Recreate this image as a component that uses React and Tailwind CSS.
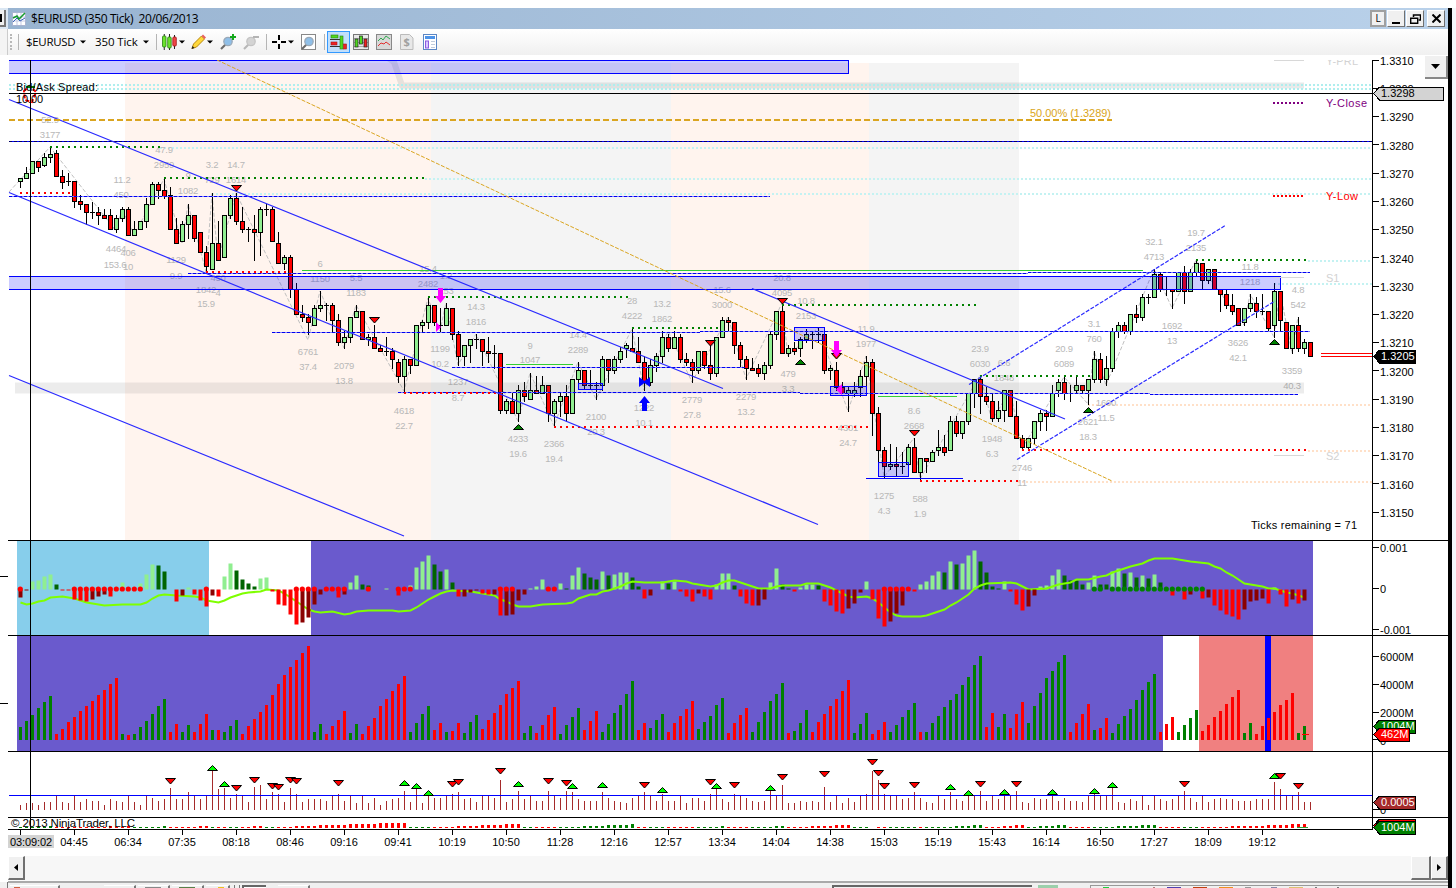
import { useMemo } from 'react';
import clsx from 'clsx';

const STEP = 6;
const X0 = 20;
const px = (i) => X0 + STEP * i;

// wick top, body top, body bottom, wick bottom
const CANDLES = `g178 178 181 187,g167 173 178 178,g161 161 173 173,r161 161 167 171,g153 157 165 166,g147 154 157 162,r150 153 176 176,r170 176 182 188,d173 181 181 185,r181 181 201 207,r195 201 204 209,r204 204 212 224,d202 212 212 218,r207 212 215 224,r209 215 218 218,r209 215 229 229,g215 218 229 232,g207 209 218 221,r207 209 235 235,g221 229 235 235,g221 221 229 229,g198 204 221 227,g182 184 204 204,r182 184 190 198,r179 190 196 198,r187 195 229 229,r218 229 243 243,g221 224 241 241,g204 215 224 238,r215 215 238 241,r232 232 252 252,r246 252 266 272,g193 243 269 269,r221 243 260 260,g215 215 257 257,g195 198 215 218,r193 198 221 224,r207 221 229 232,d227 229 229 241,r215 229 232 260,g207 209 232 255,d204 209 209 215,r207 209 241 241,r232 243 263 263,g255 257 263 269,r255 257 289 297,r283 289 314 314,r305 314 317 321,r314 317 322 334,g305 308 325 325,g291 305 308 311,d303 305 305 320,r303 305 320 331,r314 320 342 345,g331 337 342 348,g317 317 337 342,g305 311 317 317,r311 311 339 339,g334 337 339 345,r325 337 348 348,r345 348 351 351,d337 351 351 355,r348 351 359 368,r359 362 376 382,g356 359 376 391,r359 359 365 373,g325 325 365 365,g320 322 325 331,g298 305 322 328,r305 305 322 325,d308 325 325 331,g303 308 325 325,r308 308 334 339,r331 334 356 365,g345 345 356 365,g339 339 345 362,d334 339 339 348,r339 339 351 365,r337 351 353 362,d345 353 353 368,r353 353 410 413,g399 401 410 413,r393 401 413 413,g385 390 413 421,r382 390 396 401,g373 390 399 399,r376 390 393 393,g376 385 393 393,r385 385 413 421,g399 401 413 426,g393 396 401 416,r385 396 413 421,g379 379 413 413,g362 370 379 385,r370 370 385 388,d370 385 385 388,d382 385 385 399,g356 359 385 390,r359 359 370 382,g356 359 370 373,g347 351 359 362,g343 345 348 357,r329 348 351 351,r337 351 362 362,r356 362 382 390,g359 365 382 385,g353 356 365 371,g331 337 356 362,r334 337 348 351,g331 337 348 348,r334 337 359 362,r353 359 362 365,r359 362 370 382,g351 351 370 373,r351 351 365 368,r345 365 373 379,g337 337 373 376,g317 320 337 337,r317 320 322 331,r322 322 345 353,r342 345 359 367,r356 359 368 379,r358 368 370 370,r364 368 373 376,g362 365 373 379,g331 334 365 368,g311 311 334 339,r303 311 353 353,g345 348 353 356,r342 348 351 354,g337 339 348 356,g329 334 339 342,d331 334 334 348,d328 334 334 342,r333 334 370 373,g365 368 370 379,r362 370 387 390,r382 387 393 393,g387 390 393 411,g382 390 393 396,g370 376 387 396,g356 362 376 387,r359 362 413 435,r407 413 450 462,r447 450 466 477,g444 464 466 469,r447 464 466 476,d452 466 466 473,g444 447 464 466,r438 447 472 472,g458 458 472 479,r458 458 461 472,g450 452 461 461,g430 447 450 455,r435 447 452 455,g416 421 450 450,r416 421 433 436,g421 421 433 438,g393 393 421 424,g379 379 393 407,r375 379 396 413,r387 396 401 404,r393 401 418 421,g401 410 418 421,g390 390 410 421,r390 390 416 416,r401 416 438 438,r435 438 447 449,g438 438 447 450,g421 421 438 443,g410 413 421 430,r410 413 416 430,g385 393 416 416,g379 382 390 396,r377 382 393 399,d385 393 393 401,g377 385 390 393,r385 385 390 393,g379 379 390 404,g351 359 379 382,r353 359 379 382,g356 368 379 385,g328 331 368 371,g322 325 331 337,r322 325 331 333,g314 314 331 334,r305 314 317 322,g294 297 317 320,d294 297 297 303,g269 274 297 297,r272 274 289 291,d277 289 289 295,r289 289 291 308,g272 272 291 291,r266 272 291 303,g269 272 291 291,g260 263 272 275,r263 263 280 289,g269 269 280 283,r269 269 289 289,r289 289 294 311,r289 294 305 308,r294 305 311 314,r308 308 325 325,g308 308 322 325,g294 303 308 311,r297 303 311 317,d294 311 311 314,r311 311 328 331,g283 291 325 337,r291 291 320 331,r322 322 348 348,g325 325 348 353,r317 325 348 351,g339 342 348 353,r342 342 356 356`;

const MACD = 'm-8 m-1 l8 l9 l13 l15 g5 r-1 r-1 r-10 r-11 r-12 m-10 m-7 m-5 r-7 l0 l7 l0 l0 l6 l15 l25 g24 g18 l0 r-12 m-6 l2 r-5 r-11 r-17 m-6 r-7 l13 l26 g19 g10 g6 g3 l11 l12 r-2 r-15 r-16 r-25 r-35 m-33 m-28 m-15 m-5 l0 l0 r-8 m-5 l7 l14 g5 g4 l0 l0 l1 l0 r-6 l0 l4 l22 l28 l34 g25 g18 l20 g7 r-7 m-7 m-3 m-1 r-4 r-5 m-5 r-26 m-26 m-25 m-11 m-5 l1 l3 l10 l0 l0 l6 g1 l14 l22 g16 g12 g10 l18 g14 l15 l17 l17 g12 g3 r-9 m-6 l0 l8 g6 l8 r-2 r-7 r-12 m-4 r-7 r-10 l5 l16 l16 g4 r-7 r-14 r-16 m-16 m-10 l7 l21 g5 g1 r-2 l2 l5 l5 g4 r-12 r-16 r-22 r-24 m-19 m-14 m-3 l8 r-10 r-29 r-37 m-32 m-24 m-16 l0 r-2 l5 l8 l14 l18 g17 l28 g25 l26 l34 l39 g28 g17 g3 g1 l8 r-2 r-15 r-21 m-17 m-6 l3 l4 l14 l20 g14 g9 g9 g5 l7 l14 g5 g5 l18 l21 g16 l17 g12 l14 g11 l15 g7 l0 r-6 l0 r-10 m-5 l0 r-9 m-8 r-16 r-21 r-25 r-27 r-30 m-20 m-12 m-11 m-9 r-14 l2 r-5 r-17 m-10 r-14 m-11';

const VOLUME = 'g13 g19 g25 g32 g38 g44 r6 r11 r18 r23 r29 r34 r39 r45 r50 r56 r62 g6 r5 g6 g13 g19 g26 g34 g41 r8 r16 g8 g15 r8 r16 r26 g10 r10 g8 g14 g20 r6 r14 r21 r28 r35 r45 r56 r65 r73 r80 r87 r94 g8 g16 r6 r14 r20 r29 g7 g16 r6 r14 r22 r34 r41 r49 r56 r64 g8 g17 g26 g34 r10 r17 g8 r9 r17 g7 g18 g25 r11 r20 r27 r35 r46 r52 r59 g7 g14 r7 r15 r25 r33 g6 g15 g23 g32 r10 r19 r29 g8 g16 g27 g35 g46 g59 r10 r17 g12 g20 g26 r8 r17 r24 r31 r39 g11 g18 g24 g35 g42 r7 r17 r25 r32 g8 g18 g28 g39 g46 g57 r7 g9 g17 g30 r8 r18 r26 r34 r41 r49 r60 g7 g16 g27 r6 r10 r18 g8 g15 g23 g30 g37 r8 g8 g17 g24 g33 g40 g46 g55 g63 g75 g84 r13 r27 g13 g26 r12 r26 r38 g17 g34 g47 g62 g69 g78 g85 r8 r17 r26 r36 g10 r12 r22 g7 g16 g24 g31 g40 g50 g58 g66 r8 r16 r23 g8 g15 g22 g30 r9 r15 r23 r29 r36 r43 r50 g7 g17 r6 r14 r22 r28 r35 r40 r47 g7 g14';

const RANGE = '5 7 7 5 8 8 14 8 7 14 8 11 9 9 5 11 9 8 14 8 5 14 12 9 11 22 11 11 18 14 11 14 40 21 22 12 16 14 8 23 25 11 18 16 8 22 16 8 11 11 11 9 14 16 9 14 7 14 7 12 5 9 11 12 19 8 21 7 15 12 12 14 16 18 11 12 8 14 14 12 30 8 11 19 11 14 9 9 19 14 12 19 18 11 9 9 9 18 12 9 8 7 12 14 18 14 9 16 9 9 14 7 12 12 9 16 23 11 8 16 14 12 9 8 9 19 14 25 7 7 9 8 9 8 23 8 14 7 12 8 14 16 39 30 16 14 14 11 12 18 12 8 7 14 11 18 11 9 14 14 19 9 14 11 14 14 19 8 7 12 11 11 14 9 12 9 9 8 14 16 14 14 22 8 7 11 9 14 5 14 11 9 11 14 19 12 8 14 8 11 12 11 11 9 9 9 11 11 11 28 21 14 14 18 8 8';

// first bar, last bar, colour, height
const STRIP = [
  [0, 4, 'g', 1], [5, 5, 'g', 2], [6, 14, 'r', 1], [15, 15, 'r', 2], [16, 17, 'r', 1], [18, 18, 'r', 2],
  [19, 23, 'g', 1], [24, 24, 'g', 2], [25, 29, 'r', 1], [30, 31, 'r', 2], [32, 32, 'g', 1], [33, 34, 'r', 1],
  [35, 36, 'g', 1], [37, 38, 'r', 1], [39, 40, 'r', 2], [41, 42, 'g', 1], [43, 45, 'r', 1], [46, 49, 'r', 2],
  [50, 54, 'r', 3], [55, 59, 'r', 4], [60, 64, 'r', 5], [65, 68, 'g', 1], [69, 72, 'r', 1], [73, 76, 'r', 2],
  [77, 80, 'r', 3], [81, 83, 'r', 4], [84, 85, 'g', 1], [86, 89, 'r', 1], [90, 93, 'g', 1], [94, 97, 'g', 2],
  [98, 101, 'g', 3], [102, 102, 'g', 4], [103, 104, 'r', 1], [105, 107, 'g', 1], [108, 112, 'r', 1],
  [113, 116, 'g', 1], [117, 117, 'g', 2], [118, 121, 'r', 1], [122, 125, 'g', 1], [126, 127, 'g', 2],
  [128, 131, 'r', 1], [132, 135, 'r', 2], [136, 138, 'r', 3], [139, 141, 'g', 1], [143, 144, 'r', 1],
  [145, 149, 'g', 1], [150, 150, 'r', 1], [151, 155, 'g', 1], [156, 158, 'g', 2], [159, 160, 'g', 3],
  [161, 163, 'r', 1], [164, 165, 'r', 2], [166, 167, 'r', 3], [168, 169, 'g', 1], [170, 172, 'g', 2],
  [173, 174, 'g', 3], [175, 178, 'r', 1], [179, 182, 'g', 1], [183, 186, 'g', 2], [187, 189, 'g', 3],
  [190, 193, 'r', 1], [194, 196, 'g', 1], [197, 201, 'r', 1], [202, 207, 'r', 2], [208, 211, 'r', 3],
  [212, 214, 'r', 4],
];

const SIGNAL = '0,603 1,605 2,604 3,602 4,601 5,598 7,597 9,599 10,601 11,603 12,604 14,606 17,605 20,605 21,603 22,599 23,596 24,595 26,596 29,597 30,598 31,601 33,603 34,601 35,598 36,596 37,594 38,593 40,592 41,590 43,591 44,594 45,598 46,602 47,606 48,610 49,612 50,613 52,612 54,615 55,614 56,612 58,611 62,611 63,612 65,611 66,608 67,604 68,600 69,597 70,594 71,592 72,591 75,592 76,593 77,594 79,596 80,600 81,602 82,605 83,607 85,607 87,605 91,604 92,603 93,599 94,597 95,595 96,595 97,592 98,591 99,589 100,587 101,584 102,582 104,583 107,583 109,581 111,582 112,584 114,586 115,587 116,586 117,583 118,581 119,581 120,583 121,585 122,587 123,589 124,589 125,589 126,587 127,586 130,586 131,584 133,584 134,586 135,588 136,591 137,594 138,597 139,598 141,597 142,599 143,603 144,608 145,613 146,616 147,617 150,617 151,616 152,614 153,612 154,610 155,606 156,603 157,599 158,595 159,589 160,586 161,584 165,583 166,584 167,587 168,590 171,589 172,587 173,585 175,583 176,580 178,580 180,577 181,576 182,573 183,571 184,569 185,567 187,564 188,561 189,559 192,559 193,560 195,562 198,564 199,567 200,569 201,573 202,576 203,580 204,584 205,585 207,587 208,589 209,589 210,591 211,593 212,594 213,596 214,598';

const ZIGZAG = '9,192 50,147 116,231 122,209 134,235 164,179 182,243 188,204 206,272 212,193 218,260 236,193 308,340 320,291 344,348 356,305 404,391 428,298 440,331 446,303 458,365 476,334 518,421 530,373 554,426 578,362 596,399 632,329 644,390 668,331 692,382 728,317 746,379 782,303 788,356 818,328 848,411 866,356 884,477 914,438 920,479 980,375 992,421 1010,390 1022,449 1064,377 1088,404 1094,351 1106,385 1154,269 1172,308 1196,260 1244,325 1250,294 1274,337 1280,291 1292,353 1298,317';

const SWING_LABELS = [
  [50, 119, '52.9'], [50, 134, '3177'], [164, 149, '47.9'], [164, 164, '2959'], [122, 179, '11.2'], [121, 194, '450'],
  [212, 164, '3.2'], [212, 179, '729'], [236, 164, '14.7'], [236, 179, '1614'], [188, 175, '9'], [188, 190, '1082'],
  [116, 248, '4464'], [128, 252, '406'], [115, 264, '153.6'], [128, 266, '10'], [176, 259, '1129'], [176, 275, '9.9'],
  [218, 277, '450'], [218, 292, '4'], [206, 289, '1842'], [206, 303, '15.9'], [320, 263, '6'], [320, 278, '1150'],
  [356, 277, '5.5'], [356, 292, '1183'], [308, 351, '6761'], [308, 366, '37.4'], [344, 365, '2079'], [344, 380, '13.8'],
  [428, 268, '15.4'], [428, 283, '2482'], [446, 275, '1.2'], [446, 290, '153'], [476, 306, '14.3'], [476, 321, '1816'],
  [440, 348, '1199'], [440, 363, '10.2'], [458, 381, '1237'], [458, 397, '8.7'], [404, 410, '4618'], [404, 425, '22.7'],
  [530, 345, '9'], [530, 359, '1047'], [518, 438, '4233'], [518, 453, '19.6'], [554, 443, '2366'], [554, 458, '19.4'],
  [578, 334, '14.4'], [578, 349, '2289'], [596, 416, '2100'], [596, 431, '20.3'], [632, 300, '28'], [632, 315, '4222'],
  [662, 303, '13.2'], [662, 318, '1862'], [644, 407, '1222'], [644, 422, '10.1'], [692, 399, '2779'], [692, 414, '27.8'],
  [746, 396, '2279'], [746, 411, '13.2'], [722, 289, '15.6'], [722, 304, '3000'], [782, 277, '20.8'], [782, 292, '4095'],
  [806, 300, '10.8'], [806, 315, '2153'], [788, 373, '479'], [788, 388, '3.3'], [866, 328, '11.9'], [866, 343, '1977'],
  [848, 427, '4301'], [848, 442, '24.7'], [914, 410, '8.6'], [914, 425, '2668'], [884, 495, '1275'], [884, 510, '4.3'],
  [920, 498, '588'], [920, 513, '1.9'], [980, 348, '23.9'], [980, 363, '6030'], [1004, 362, '6.6'], [1004, 377, '1848'],
  [992, 438, '1948'], [992, 453, '6.3'], [1022, 467, '2746'], [1022, 482, '11'], [1064, 348, '20.9'], [1064, 363, '6089'],
  [1094, 323, '3.1'], [1094, 338, '760'], [1106, 402, '1600'], [1106, 417, '11.5'], [1088, 421, '2621'], [1088, 436, '18.3'],
  [1154, 241, '32.1'], [1154, 256, '4713'], [1196, 232, '19.7'], [1196, 247, '2135'], [1172, 325, '1692'], [1172, 340, '13'],
  [1238, 342, '3626'], [1238, 357, '42.1'], [1250, 266, '11.8'], [1250, 281, '1218'], [1298, 289, '4.8'], [1298, 304, '542'],
  [1292, 370, '3359'], [1292, 385, '40.3'],
];

const TIMES = ['04:45', '06:34', '07:35', '08:18', '08:46', '09:16', '09:41', '10:19', '10:50', '11:28', '12:16', '12:57', '13:34', '14:04', '14:38', '15:03', '15:19', '15:43', '16:14', '16:50', '17:27', '18:09', '19:12'];

const RED_DOTS = [[0, 0], [9, 20], [31, 31], [46, 49], [51, 54], [58, 58], [63, 65], [80, 82], [88, 89], [144, 148]];
const GREEN_DOTS = [[179, 180], [182, 197]];

const RANGE_DOWN = [[25, 781], [36, 788], [39, 780], [42, 786], [43, 787], [45, 780], [46, 781], [53, 783], [72, 784], [73, 782], [80, 771], [88, 781], [91, 783], [104, 785], [115, 782], [119, 785], [127, 777], [134, 774], [142, 762], [143, 773], [144, 786], [149, 785], [160, 784], [166, 784], [194, 784], [213, 786]];
const RANGE_UP = [[32, 768], [34, 784], [64, 783], [66, 786], [68, 793], [83, 784], [92, 786], [97, 785], [107, 790], [116, 786], [125, 788], [155, 787], [158, 793], [164, 792], [172, 792], [179, 791], [182, 785], [209, 776]];

const COLORS = { l: '#90ee90', g: '#006400', r: '#ff0000', m: '#8b0000' };

const parse = (str) => str.split(' ').map((s) => ({ c: s[0], v: Number(s.slice(1)) }));
const expand = (ranges) => ranges.flatMap(([a, b]) => Array.from({ length: b - a + 1 }, (_, k) => a + k));

const Line = ({ x1, x2, y, y2 = y, color, w = 1, dash }) => (
  <line x1={x1} x2={x2} y1={y} y2={y2} stroke={color} strokeWidth={w} strokeDasharray={dash} />
);

// blue line with a stronger dash on top
const Level = ({ x1, x2, y }) => (
  <>
    <Line x1={x1} x2={x2} y={y} color="#7c7cff" />
    <Line x1={x1} x2={x2} y={y} color="#0000f0" dash="3 2" />
  </>
);

const Down = ({ x, y, fill = '#ff0000' }) => (
  <path d={`M${x - 4.5} ${y - 2.5}h10l-5 5.5z`} fill={fill} stroke="#000" strokeWidth="1" />
);

const Up = ({ x, y, fill = '#008000' }) => (
  <path d={`M${x - 4.5} ${y + 2.5}h10l-5 -5z`} fill={fill} stroke="#000" strokeWidth="1" />
);

const Tag = ({ y, w, fill, text, color = '#fff', h = 13 }) => (
  <g>
    <path
      d={`M1373.5 ${y + 0.5}l6 -${h / 2}h${w}v${h}h-${w}z`}
      fill={fill}
      stroke="#000"
      shapeRendering="crispEdges"
    />
    <text x="1381" y={y + 4} fill={color}>{text}</text>
  </g>
);

function PricePane() {
  const candles = useMemo(
    () => CANDLES.split(',').map((row) => [row[0], ...row.slice(1).split(' ').map(Number)]),
    []
  );

  return (
    <g clipPath="url(#price-clip)">
      <clipPath id="price-clip">
        <rect x="8" y="60" width="1365" height="480" />
      </clipPath>

      {/* Sessions */}
      <g shapeRendering="crispEdges">
        <rect x="125" y="63" width="306" height="477" fill="#fff4ee" />
        <rect x="431" y="63" width="240" height="477" fill="#f4f4f4" />
        <rect x="671" y="63" width="198" height="477" fill="#fff4ee" />
        <rect x="869" y="63" width="150" height="477" fill="#f4f4f4" />
      </g>
      <path d="M388 58L394 62L402 85.5H1304" fill="none" stroke="#708080" strokeOpacity="0.17" strokeWidth="6" />

      <g shapeRendering="crispEdges">
        <Line x1={9} x2={1372} y={85} w={2} color="#afeeee" dash="2 2" />
        <Line x1={9} x2={1372} y={89} w={2} color="#afeeee" dash="2 2" />
        <Line x1={160} x2={1372} y={148} w={2} color="#c4f2f2" dash="2 2" />
        <Line x1={425} x2={1372} y={179} w={2} color="#c4f2f2" dash="2 2" />
        <Line x1={212} x2={1372} y={194} w={2} color="#c4f2f2" dash="2 2" />
        <Line x1={1308} x2={1372} y={261} w={2} color="#c4f2f2" dash="2 2" />
        <Line x1={1274} x2={1372} y={284} w={2} color="#c4f2f2" dash="2 2" />
        <Line x1={1088} x2={1372} y={405} w={2} color="#ffe0c8" dash="2 2" />
        <Line x1={1308} x2={1372} y={451} w={2} color="#ffe0c8" dash="2 2" />
        <Line x1={1018} x2={1372} y={482} w={2} color="#ffe0c8" dash="2 2" />
      </g>

      <polyline points={ZIGZAG} fill="none" stroke="#c0c0c0" strokeDasharray="4 2" />
      <g fill="#b8b8b8" fontSize="9.500" letterSpacing="-0.220" textAnchor="middle">
        {SWING_LABELS.map(([x, y, t]) => (
          <text key={`${x}-${y}`} x={x} y={y + 3.5}>{t}</text>
        ))}
      </g>

      {/* Candles */}
      <g shapeRendering="crispEdges" stroke="#000">
        {candles.map(([c, h, t, b, l], i) => (
          <g key={i}>
            <line x1={px(i) + 0.5} x2={px(i) + 0.5} y1={h} y2={l + 1} />
            {c === 'd' ? (
              <line x1={px(i) - 2} x2={px(i) + 3} y1={t + 0.5} y2={t + 0.5} />
            ) : (
              <rect
                x={px(i) - 1.5}
                y={t + 0.5}
                width="4"
                height={Math.max(b - t, 2)}
                fill={c === 'g' ? '#90ee90' : '#ff0000'}
              />
            )}
          </g>
        ))}
      </g>

      <rect x="15" y="382.500" width="1289" height="11" fill="#606060" fillOpacity="0.12" />

      {/* Swing levels */}
      <g shapeRendering="crispEdges">
        <Line x1={302} x2={1143} y={270.5} color="#32cd32" />
        <Line x1={506} x2={573} y={364.5} color="#32cd32" />
        <Line x1={878} x2={957} y={396.5} color="#32cd32" />
        <Line x1={866} x2={963} y={478.5} color="#0000ff" />
        <Line x1={9} x2={1372} y={141.5} color="#0000ff" />
        <Line x1={9} x2={1372} y={141.5} color="#000060" dash="3 2" />
        <Level x1={9} x2={770} y={196.5} />
        <Level x1={188} x2={1028} y={273.5} />
        <Level x1={1028} x2={1310} y={272.5} />
        <Level x1={272} x2={700} y={332.5} />
        <Level x1={700} x2={1310} y={331.5} />
        <Level x1={452} x2={745} y={367.5} />
        <Level x1={398} x2={800} y={392.5} />
        <Level x1={800} x2={1150} y={393.5} />
        <Level x1={1150} x2={1298} y={394.5} />
        {[[50, 160, 147], [164, 425, 178], [428, 628, 297], [632, 718, 328], [782, 977, 305], [980, 1092, 376], [1196, 1308, 260]].map(([a, b, y]) => (
          <Line key={y} x1={a} x2={b} y={y} w={2} color="#008000" dash="2 4" />
        ))}
        {[[20, 72, 193], [206, 290, 272], [404, 500, 393], [554, 868, 427], [920, 1018, 481], [1022, 1308, 450]].map(([a, b, y]) => (
          <Line key={y} x1={a} x2={b} y={y} w={2} color="#ff0000" dash="2 4" />
        ))}
      </g>

      {/* Zones */}
      <g fill="#0000ff" fillOpacity="0.2" stroke="#0000ff" shapeRendering="crispEdges">
        <path d="M9 60H848.5V73.5H9" />
        <path d="M9 276.5H1280.5V289.5H9" />
        <rect x="578.5" y="383.5" width="24" height="6" />
        <rect x="794.5" y="327.5" width="30" height="13" />
        <rect x="830.5" y="386.5" width="36" height="9" />
        <rect x="878.5" y="462.5" width="30" height="14" />
      </g>

      {/* Channels */}
      <g stroke="#2a2aff" strokeWidth="1.200">
        <path d="M9 99.500L723 388.500M9 192.500L818 524.500M9 375.500L404 536M752 288.500L1065 419" />
        <path d="M969 384.500L1226 225M1017 459.500L1275 301" strokeDasharray="4 1.500" />
      </g>
      <path d="M217 60L1112 481" stroke="#daa520" strokeDasharray="4 1.500" />
      <Line x1={9} x2={1112} y={120} w={2} color="#daa520" dash="6 3" />
      <text x="1030" y="117" fill="#daa520" textLength="81">50.00% (1.3289)</text>

      {/* Signals */}
      <Down x={236} y={188} />
      <Down x={374} y={320} />
      <Down x={710} y={343} />
      <Down x={782} y={301} />
      <Down x={836} y={356} />
      <Down x={914} y={433} />
      <Up x={518} y={427} />
      <Up x={800} y={362} />
      <Up x={1088} y={410} />
      <Up x={1274} y={342} />
      <path d="M438 288h5v8h3l-5.500 7l-5.500 -7h3zM834 341h5v9h3l-5.500 7l-5.500 -7h3zM436 322v10l5 -5zM842 384v11l-6 -5.500z" fill="#ff00ff" />
      <path d="M642 411h5v-8h3l-5.500 -7l-5.500 7h3zM639 377v10l5.500 -4l5.500 4v-10l-5.500 4z" fill="#0000ff" />

      {/* Prior day levels */}
      <g shapeRendering="crispEdges">
        <Line x1={1274} x2={1304} y={60.5} color="#d8d8d8" />
        <Line x1={1274} x2={1304} y={277.5} color="#d8d8d8" />
        <Line x1={1274} x2={1304} y={455.5} color="#d8d8d8" />
        <Line x1={1273} x2={1304} y={103} w={2} color="#800080" dash="2 2" />
        <Line x1={1273} x2={1304} y={196} w={2} color="#ff0000" dash="2 2" />
      </g>
      <text x="1326" y="65" fill="#d3d3d3" textLength="32">Y-PRL</text>
      <text x="1326" y="107" fill="#800080" textLength="41">Y-Close</text>
      <text x="1326" y="200" fill="#ff0000" textLength="32">Y-Low</text>
      <text x="1326" y="282" fill="#d3d3d3">S1</text>
      <text x="1326" y="460" fill="#d3d3d3">S2</text>
      <text x="1251" y="529" fill="#000" textLength="106">Ticks remaining = 71</text>

      <path d="M24 91l6 -5l6 6l-4 10l-7 -2z" fill="none" stroke="#ff0000" strokeWidth="2" strokeDasharray="4 2" />
      <path d="M26 87h9" stroke="#008000" strokeWidth="2" />
      <text x="16" y="91" fill="#000" textLength="82">Bid/Ask Spread:</text>
      <text x="16" y="103" fill="#000" textLength="27">10.00</text>
    </g>
  );
}

function MacdPane() {
  const bars = useMemo(() => parse(MACD), []);
  const signal = SIGNAL.split(' ').map((p) => {
    const [i, y] = p.split(',').map(Number);
    return `${px(i) + 0.5},${y - 0.5}`;
  }).join(' ');

  return (
    <g>
      <rect x="17" y="541" width="192" height="94" fill="#87ceeb" />
      <rect x="311" y="541" width="1002" height="94" fill="#6a5acd" />
      {bars.map(({ c, v }, i) => v > 0 && (
        <rect key={i} x={px(i) - 1.5} y={589.5 - v} width="4" height={v} fill={COLORS[c]} />
      ))}
      <polyline points={signal} fill="none" stroke="#7fff00" strokeWidth="2" />
      {bars.map(({ c, v }, i) => v < 0 && (
        <rect key={i} x={px(i) - 1.5} y="589.500" width="4" height={-v} fill={COLORS[c]} />
      ))}
      {expand(RED_DOTS).map((i) => <circle key={i} cx={px(i) + 0.3} cy="589" r="2.600" fill="#ff0000" />)}
      {expand(GREEN_DOTS).map((i) => <circle key={i} cx={px(i) + 0.3} cy="589" r="2.600" fill="#008000" />)}
    </g>
  );
}

function VolumePane() {
  const bars = useMemo(() => parse(VOLUME), []);
  return (
    <g shapeRendering="crispEdges">
      <rect x="17" y="636" width="1146" height="115" fill="#6a5acd" />
      <rect x="1199" y="636" width="114" height="115" fill="#f08080" />
      <rect x="1265" y="636" width="6" height="115" fill="#0000ff" />
      {bars.map(({ c, v }, i) => (
        <rect key={i} x={px(i) - 1} y={740 - v} width="3" height={v} fill={c === 'g' ? '#008000' : '#ff0000'} />
      ))}
      <rect x="1302" y="734" width="7" height="1" fill="#ff0000" />
    </g>
  );
}

function RangePane() {
  return (
    <g>
      <g shapeRendering="crispEdges">
        {RANGE.split(' ').map((v, i) => (
          <rect key={i} x={px(i)} y={810 - Number(v)} width="1" height={v} fill="#a52a2a" />
        ))}
        <Line x1={9} x2={1372} y={795.5} color="#0000ff" />
      </g>
      {RANGE_UP.map(([i, y]) => <Up key={i} x={px(i)} y={y} fill="#00ff00" />)}
      {RANGE_DOWN.map(([i, y]) => <Down key={i} x={px(i)} y={y} />)}
      <Down x={px(210)} y={776} />
    </g>
  );
}

function Axes() {
  return (
    <g>
      <g shapeRendering="crispEdges">
        {[540.5, 635.5, 751.5, 817.5].map((y) => <Line key={y} x1={8} x2={1448} y={y} color="#000" />)}
        <Line x1={8} x2={1373} y={829.5} color="#000" />
        <Line x1={1372.5} x2={1372.5} y={60} y2={829} color="#000" />
        <Line x1={9} x2={1373} y={93.5} color="#000" />
        <Line x1={30.5} x2={30.5} y={60} y2={829} color="#000" />
        {Array.from({ length: 24 }, (_, k) => (
          <Line key={k} x1={20.5 + 54 * k} x2={20.5 + 54 * k} y={829} y2={835} color="#000" />
        ))}
        <Line x1={1321} x2={1372} y={353.5} color="#ff0000" />
        <Line x1={1321} x2={1372} y={356.5} color="#ff0000" />
        {[548, 589, 630, 657, 685, 713, 740, 810].map((y) => (
          <Line key={y} x1={1373} x2={1379} y={y - 0.5} color="#000" />
        ))}
        {Array.from({ length: 17 }, (_, k) => (
          <Line key={k} x1={1373} x2={1379} y={Math.floor(60 + 28.25 * k) + 0.5} color="#000" />
        ))}
      </g>
      <g fill="#000">
        {Array.from({ length: 17 }, (_, k) => (
          <text key={k} x="1380" y={Math.round(64.8 + 28.25 * k)}>{(1.331 - 0.001 * k).toFixed(4)}</text>
        ))}
        <text x="1380" y="552">0.001</text>
        <text x="1380" y="593">0</text>
        <text x="1380" y="634">-0.001</text>
        <text x="1380" y="661">6000M</text>
        <text x="1380" y="689">4000M</text>
        <text x="1380" y="717">2000M</text>
        <text x="1380" y="745">0</text>
        <text x="1380" y="814">0</text>
      </g>
      <Tag y={93} w={64} fill="#d3d3d3" text="1.3298" color="#000" />
      <Tag y={356} w={36} fill="#000" text="1.3205" />
      <Tag y={726} w={36} fill="#008000" text="1004M" />
      <Tag y={734} w={30} fill="#ff0000" text="462M" />
      <Tag y={802} w={36} fill="#a52a2a" text="0.0005" />
      <Tag y={825} w={36} fill="#ff0000" text="" />
      <Tag y={827} w={36} fill="#008000" text="1004M" />

      <g shapeRendering="crispEdges">
        {STRIP.flatMap(([a, b, c, h]) => expand([[a, b]]).map((i) => (
          <rect key={i} x={px(i) - 1} y={828 - h} width="3" height={h} fill={c === 'g' ? '#008000' : '#ff0000'} />
        )))}
        <rect x="1297" y="827" width="11" height="1" fill="#32a032" />
      </g>
      <text x="11" y="827" fontSize="11.500" textLength="124">© 2013 NinjaTrader, LLC</text>

      <rect x="8" y="835" width="46" height="13" fill="#d3d3d3" />
      <text x="10" y="846" textLength="42">03:09:02</text>
      <g textAnchor="middle">
        {TIMES.map((t, k) => <text key={t} x={74 + 54 * k} y="846">{t}</text>)}
      </g>
    </g>
  );
}

const Arrow = ({ className }) => (
  <svg className={clsx('shrink-0', className)} width="6" height="4" viewBox="0 0 6 4">
    <path d="M0 .5h6L3 3.500z" fill="#000" />
  </svg>
);

const Sep = ({ className }) => <div className={clsx('h-4 w-px shrink-0 bg-[#b5b5b5]', className)} />;

const Lens = ({ gray }) => (
  <>
    <path d="M1 15l4.500 -4.500" stroke={gray ? '#b8b8b8' : '#6b6b6b'} strokeWidth="2.200" />
    <circle cx="8" cy="7.500" r="4.200" fill={gray ? '#d4d4d4' : '#8fbfe8'} stroke={gray ? '#c4c4c4' : '#9aa9b8'} strokeWidth="1.300" />
  </>
);

function Toolbar() {
  return (
    <div className="flex h-[26px] items-center bg-linear-to-b from-white to-[#f0f0f0] text-[12px] text-black">
      <div className="ml-0.5 h-4 w-1 border-l-2 border-dotted border-[#b8b8b8]" />
      <Sep className="ml-1" />
      <span className="ml-[7px] w-[50px] shrink-0 whitespace-nowrap text-[11.5px] tracking-[-0.3px]">$EURUSD</span>
      <Arrow className="ml-1" />
      <span className="ml-[9px] w-11 shrink-0 whitespace-nowrap text-[11.5px] tracking-[-0.1px]">350 Tick</span>
      <Arrow className="ml-1" />
      <Sep className="ml-[7px]" />
      <svg className="ml-[5px] shrink-0" width="15" height="16" viewBox="0 0 15 16">
        <path d="M2.250 0v16M7.500 0v16M12.500 1v14" stroke="#222" />
        <rect x=".5" y="2" width="3.500" height="11" rx="1" fill="#6be32c" stroke="#2a7d10" strokeWidth=".8" />
        <rect x="5.700" y="3" width="3.500" height="11" rx="1" fill="#6be32c" stroke="#2a7d10" strokeWidth=".8" />
        <rect x="10.800" y="3" width="3.500" height="9" rx="1" fill="#f04848" stroke="#a01818" strokeWidth=".8" />
      </svg>
      <Arrow className="ml-0.5" />
      <svg className="ml-1.5 shrink-0" width="15" height="16" viewBox="0 0 15 16">
        <path d="M1 14.500l1.500 -4.500l8 -8l3 3l-8 8z" fill="#ffd83a" stroke="#b8860b" />
        <path d="M10.500 2l1.500 -1.500l3 3l-1.500 1.500z" fill="#e86060" />
        <path d="M.5 15l1 -3l2 2z" fill="#222" />
      </svg>
      <Arrow className="ml-px" />
      <svg className="ml-[7px] shrink-0" width="16" height="16" viewBox="0 0 16 16">
        <Lens />
        <path d="M13 0v6M10 3h6" stroke="#14a81c" strokeWidth="2" />
      </svg>
      <svg className="ml-[7px] shrink-0" width="16" height="16" viewBox="0 0 16 16">
        <Lens gray />
        <path d="M10 3h6" stroke="#b4b4b4" strokeWidth="2" />
      </svg>
      <Sep className="ml-[7px]" />
      <svg className="ml-[5px] shrink-0" width="14" height="14" viewBox="0 0 14 14">
        <path d="M7 0v5M7 9v5M0 7h5M9 7h5" stroke="#000" strokeWidth="2" />
      </svg>
      <Arrow className="ml-0.5" />
      <svg className="ml-[7px] shrink-0" width="15" height="16" viewBox="0 0 15 16">
        <rect x=".5" y=".5" width="14" height="15" fill="#fff" stroke="#888" />
        <Lens />
      </svg>
      <Sep className="ml-2" />
      <div className="ml-0.5 flex h-[22px] w-[23px] shrink-0 items-center justify-center border border-[#3399ff] bg-[#c2dffb]">
        <svg width="17" height="16" viewBox="0 0 17 16">
          <path d="M0 5.500h10M0 12.500h10" stroke="#333" />
          <rect x="1" y="1" width="7" height="3" fill="#50d820" stroke="#2a7d10" strokeWidth=".6" />
          <rect x="1" y="8" width="6" height="3" fill="#ee2222" stroke="#a01818" strokeWidth=".6" />
          <rect x="10" y="2" width="3" height="13" fill="#50d820" stroke="#2a7d10" strokeWidth=".6" />
          <rect x="13.500" y="10" width="3" height="5" fill="#ee2222" stroke="#a01818" strokeWidth=".6" />
        </svg>
      </div>
      <svg className="ml-[3px] shrink-0" width="17" height="16" viewBox="0 0 17 16">
        <rect x=".5" y=".5" width="15" height="15" fill="#e8e8e8" stroke="#777" />
        <path d="M1 4.500h14M1 8.500h14M1 12.500h14" stroke="#aaa" />
        <rect x="2" y="5" width="3" height="8" fill="#50d820" stroke="#222" strokeWidth=".7" />
        <rect x="6.500" y="2" width="3" height="8" fill="#50d820" stroke="#222" strokeWidth=".7" />
        <rect x="11" y="5" width="3" height="8" fill="#ee2222" stroke="#222" strokeWidth=".7" />
      </svg>
      <svg className="ml-1.5 shrink-0" width="16" height="16" viewBox="0 0 16 16">
        <rect x=".5" y=".5" width="15" height="15" fill="#d8d8d8" stroke="#888" />
        <path d="M2 7l3 -3l2 2l3 -4l4 3" fill="none" stroke="#2fa84f" />
        <path d="M2 12l3 -3l3 1l2 -2l4 3" fill="none" stroke="#e03030" />
      </svg>
      <svg className="ml-2 shrink-0" width="14" height="16" viewBox="0 0 14 16">
        <path d="M.5 .5h9l3.500 3.500v11.500h-12.500z" fill="#e8e8e8" stroke="#bbb" />
        <text x="3.500" y="12" fontSize="11" fontWeight="bold" fill="#a0a0a0">$</text>
      </svg>
      <svg className="ml-[9px] shrink-0" width="15" height="16" viewBox="0 0 15 16">
        <rect x=".5" y=".5" width="13" height="15" fill="#fff" stroke="#5b86c4" />
        <rect x="2" y="2" width="10" height="3" fill="#4d93e8" />
        <rect x="2.500" y="7" width="3" height="7" fill="#d8c8ff" stroke="#8a5be0" />
        <path d="M8 7.500h4M8 10.500h4M8 13.500h4" stroke="#c0ccdc" />
      </svg>
    </div>
  );
}

const CaptionButton = ({ className, children }) => (
  <div className={clsx('flex h-[17px] items-center justify-center border border-t-white border-l-white border-r-[#707070] border-b-[#707070] bg-[#f0f0f0] text-black', className)}>
    {children}
  </div>
);

function TitleBar() {
  return (
    <div className="flex h-[21px] items-center bg-linear-to-r from-[#99b4d1] to-[#b9d1ea] pr-[3px] pl-1">
      <svg width="14" height="14" viewBox="0 0 14 14">
        <rect x=".5" y=".5" width="13" height="13" fill="#fff" stroke="#aab4d0" />
        <path d="M1 5h12M1 9h12M5 1v12M9 1v12" stroke="#c3c9e4" />
        <path d="M1 10l4 -4l3 3l5 -3" fill="none" stroke="#3a62b8" />
        <path d="M1 6l4 -2l2 3l6 -6" fill="none" stroke="#159a2c" strokeWidth="1.500" />
      </svg>
      <span className="ml-[5px] whitespace-pre text-[12px] tracking-[-0.4px] text-black">$EURUSD (350 Tick)  20/06/2013</span>
      <CaptionButton className="ml-auto w-4 border-2 border-[#a0a0a0]! text-[10px]">L</CaptionButton>
      <CaptionButton className="ml-px w-[18px] pt-2">
        <div className="h-0.5 w-2 bg-black" />
      </CaptionButton>
      <CaptionButton className="ml-px w-[18px]">
        <svg width="11" height="10" viewBox="0 0 11 10" fill="none" stroke="#000">
          <path d="M3.500 3V1h7v5h-2" strokeWidth="1.500" />
          <path d="M.7 4.200h7v5h-7z" strokeWidth="1.400" />
        </svg>
      </CaptionButton>
      <CaptionButton className="ml-[3px] w-[18px]">
        <svg width="9" height="9" viewBox="0 0 9 9">
          <path d="M.5 .5l8 8M8.500 .5l-8 8" stroke="#000" strokeWidth="2" />
        </svg>
      </CaptionButton>
    </div>
  );
}

function ScrollBar() {
  return (
    <div className="flex h-6 justify-between bg-[#f7f7f7]">
      <CaptionButton className="h-6! w-[17px] border-r-2 border-b-2">
        <svg width="4" height="7" viewBox="0 0 4 7"><path d="M4 0v7L0 3.500z" /></svg>
      </CaptionButton>
      <div className="flex">
        <CaptionButton className="h-6! w-5 border-r-2 border-b-2" />
        <CaptionButton className="h-6! w-[17px] border-r-2 border-b-2">
          <svg width="4" height="7" viewBox="0 0 4 7"><path d="M0 0v7L4 3.500z" /></svg>
        </CaptionButton>
      </div>
    </div>
  );
}

function TaskStrip() {
  return (
    <div className="flex h-[7px] border-t-2 border-[#aaaaaa] bg-[#f0f0f0]">
      <div className="mt-0.5 ml-0.5 flex h-1 w-[50px] border-t border-r-2 border-t-white border-r-[#777777] pl-1">
        <div className="mt-px h-0.5 w-1.5 bg-[#d06040]" />
      </div>
      <div className="mt-0.5 ml-11 h-1 w-8 border-t border-r-2 border-t-white border-r-[#777777]" />
      <div className="mt-0.5 ml-0.5 flex h-1 w-8 justify-center border-t border-r-2 border-t-white border-r-[#777777]">
        <div className="mt-px h-0.5 w-4 bg-[#888888]" />
      </div>
      <div className="mt-0.5 ml-0.5 flex h-1 w-8 justify-center border-t border-r-2 border-t-white border-r-[#777777]">
        <div className="mt-px h-0.5 w-4 bg-[#5a8048]" />
      </div>
      <div className="mt-0.5 ml-0.5 flex h-1 w-6 justify-end border-t border-r-2 border-t-white border-r-[#777777] pr-1">
        <div className="mt-px h-0.5 w-1.5 bg-[#f0c020]" />
      </div>
      <div className="mt-0.5 ml-1 h-1 w-1.5 border-x border-[#777777]" />
      <div className="mt-0.5 ml-0.5 h-1 w-6 border-t-2 border-l-2 border-[#666666] bg-white" />
      <div className="mt-0.5 ml-3 h-1 w-8 border-t border-r-2 border-t-white border-r-[#777777]" />
      <div className="mt-0.5 ml-[522px] h-1 w-[200px] shrink-0 border-t-2 border-l-2 border-[#666666]" />
      <div className="mt-0.5 ml-1.5 h-1 w-5 shrink-0 bg-[#9ccfab]" />
      <div className="mt-0.5 ml-8 flex h-1 grow gap-3 border-t border-l border-[#999999] pl-3">
        <div className="mt-px h-0.5 w-1.5 bg-[#20d040]" />
        <div className="mt-px ml-8 h-0.5 w-0.5 bg-[#b08080]" />
        <div className="mt-px h-0.5 w-3.5 bg-[#5040b0]" />
        <div className="mt-px h-0.5 w-3.5 bg-[#c04010]" />
        <div className="mt-px h-0.5 w-3.5 bg-[#f09020]" />
        <div className="mt-px h-0.5 w-1.5 bg-[#999999]" />
        <div className="mt-px ml-2 h-0.5 w-1.5 bg-[#8888aa]" />
        <div className="mt-px h-0.5 w-3.5 bg-[#e0c070]" />
        <div className="mt-px h-0.5 w-0.5 bg-[#777777]" />
        <div className="mt-px ml-2 h-0.5 w-0.5 bg-[#777777]" />
      </div>
    </div>
  );
}

export default function App() {
  return (
    <div className="flex h-[888px] w-[1456px] overflow-hidden bg-white pt-2 font-['Open_Sans','Noto_Sans',sans-serif]">
      <div className="flex w-2 shrink-0 flex-col">
        <div className="h-[21px] bg-[#dbe7f3] py-0.5 pr-0.5">
          <div className="flex h-[17px] items-center border-r-2 border-b-2 border-[#777777] bg-[#f0f0f0]">
            <div className="h-2 w-0.5 bg-black" />
          </div>
        </div>
        <div className="h-[26px] border-r border-[#cccccc] bg-[#f4f4f4]" />
        <div className="mt-[521px] h-px bg-black" />
        <div className="mt-[126px] h-px bg-black" />
        <div className="mt-auto h-1.5 border-r border-[#777777] bg-[#f0f0f0]" />
      </div>

      <div className="relative flex w-[1440px] shrink-0 flex-col">
        <TitleBar />
        <Toolbar />
        <svg
          className="block shrink-0"
          width="1440"
          height="801"
          viewBox="8 55 1440 801"
          fontFamily="'Liberation Sans', Arial, sans-serif"
          fontSize="11"
        >
          <PricePane />
          <MacdPane />
          <VolumePane />
          <RangePane />
          <Axes />
        </svg>
        <ScrollBar />
        <div className="h-px bg-[#fafafa]" />
        <TaskStrip />
        <div className="absolute top-12 right-0 flex h-[23px] w-[23px] items-center justify-center border-r-2 border-b-2 border-[#888888] bg-[#f0f0f0]">
          <svg width="9" height="5" viewBox="0 0 9 5"><path d="M0 0h9L4.500 5z" /></svg>
        </div>
      </div>

      <div className="w-1 shrink-0 bg-black" />
      <div className="grow bg-[#f4f7fb]" />
    </div>
  );
}
